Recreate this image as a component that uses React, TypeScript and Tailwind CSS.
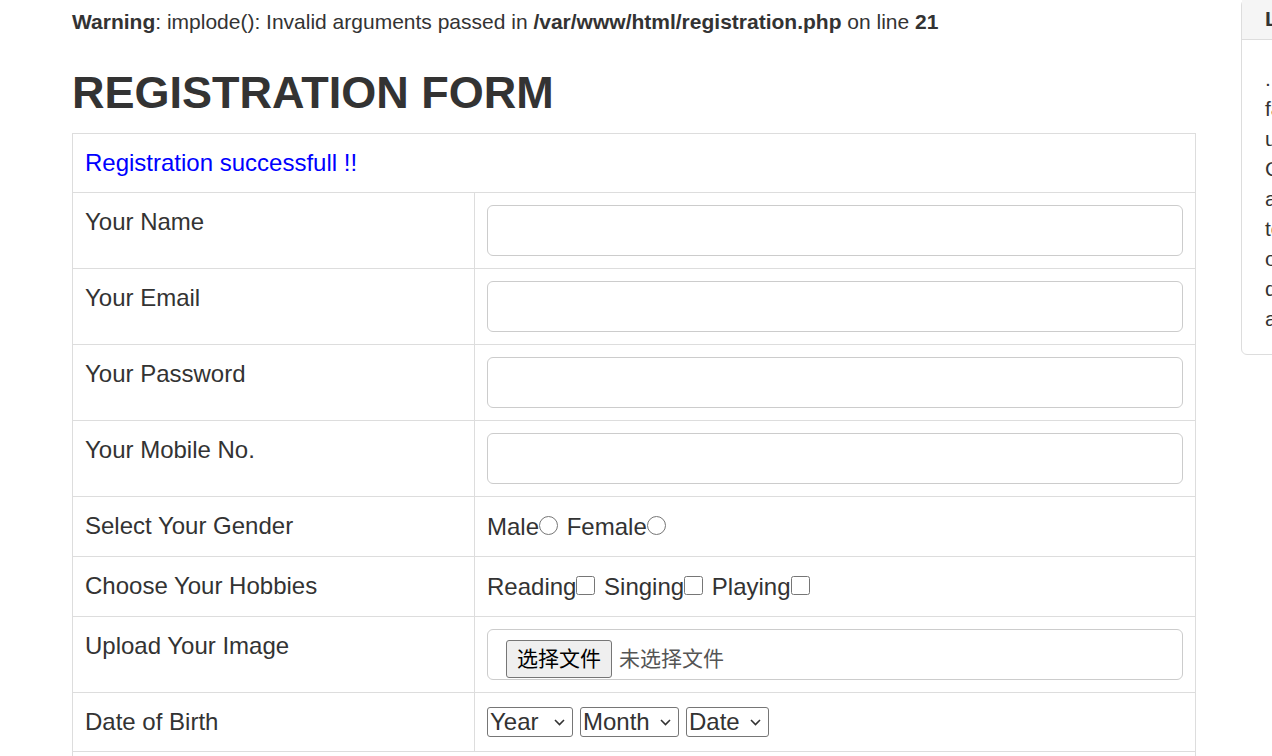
import React from "react";

const font = { fontFamily: '"Liberation Sans", Arial, "Noto Sans CJK SC", sans-serif' };

// Rows that hold a plain text input
const textFields = ["Your Name", "Your Email", "Your Password", "Your Mobile No."];

const Label: React.FC<{ children: React.ReactNode }> = ({ children }) => (
  <td className="w-[402px] border border-[#ddd] p-3 align-top leading-[34px]">
    {children}
  </td>
);

const Radio: React.FC<{ name: string }> = ({ name }) => (
  <input
    type="radio"
    name={name}
    className="m-0 mr-[2px] h-[19px] w-[19px] align-baseline"
  />
);

const Check: React.FC = () => (
  <input type="checkbox" className="m-0 mr-[2px] h-[19px] w-[19px] align-baseline" />
);

// Select box with a thin chevron on the right
const DobSelect: React.FC<{ label: string; width: string }> = ({ label, width }) => (
  <span className={`relative block h-[30px] ${width}`}>
    <select className="block h-[30px] w-full appearance-none rounded-[3px] border border-[#767676] bg-white pl-[2px] text-[24px] leading-[28px] text-[#333]">
      <option>{label}</option>
    </select>
    <svg
      className="pointer-events-none absolute right-[8px] top-[12px]"
      width="11"
      height="7"
      viewBox="0 0 11 7"
      fill="none"
    >
      <path d="M1 1l4.5 4.5L10 1" stroke="#333" strokeWidth="1.6" />
    </svg>
  </span>
);

export default function App() {
  return (
    <div
      className="flex h-[756px] w-[1272px] overflow-hidden bg-white text-[#333]"
      style={font}
    >
      {/* Main column */}
      <div className="w-[1124px] shrink-0 ml-[72px]">
        <p className="mt-[8px] text-[21px] leading-[28px]">
          <b>Warning</b>: implode(): Invalid arguments passed in{" "}
          <b>/var/www/html/registration.php</b> on line <b>21</b>
        </p>
        <h2 className="mt-[32px] mb-[15px] text-[45px] font-bold leading-[50px]">
          REGISTRATION FORM
        </h2>

        <form>
          <table className="w-[1124px] border-collapse text-[24px]">
            <tbody>
              <tr>
                <td
                  colSpan={2}
                  className="border border-[#ddd] p-3 leading-[34px] text-[#0000ff]"
                >
                  Registration successfull !!
                </td>
              </tr>

              {textFields.map((label) => (
                <tr key={label}>
                  <Label>{label}</Label>
                  <td className="border border-[#ddd] p-3">
                    <input
                      type={label === "Your Password" ? "password" : "text"}
                      className="block h-[51px] w-full rounded-[6px] border border-[#ccc] px-[18px] outline-none"
                    />
                  </td>
                </tr>
              ))}

              <tr>
                <Label>Select Your Gender</Label>
                <td className="border border-[#ddd] p-3 leading-[35px]">
                  Male<Radio name="gender" /> Female<Radio name="gender" />
                </td>
              </tr>

              <tr>
                <Label>Choose Your Hobbies</Label>
                <td className="border border-[#ddd] p-3 leading-[35px]">
                  Reading<Check /> Singing<Check /> Playing<Check />
                </td>
              </tr>

              <tr>
                <Label>Upload Your Image</Label>
                <td className="border border-[#ddd] p-3">
                  <div className="flex h-[51px] items-start rounded-[6px] border border-[#ccc] pl-[18px] pt-[10px] text-[21px]">
                    <div className="flex h-[38px] items-center gap-[7px]">
                      <button
                        type="button"
                        className="h-[38px] rounded-[3px] border border-[#767676] bg-[#efefef] px-[10px] text-black"
                      >
                        选择文件
                      </button>
                      <span className="text-[#555]">未选择文件</span>
                    </div>
                  </div>
                </td>
              </tr>

              <tr>
                <Label>Date of Birth</Label>
                <td className="border border-[#ddd] p-3 leading-[34px]">
                  <div className="flex h-[34px] items-center gap-[7px]">
                    <DobSelect label="Year" width="w-[86px]" />
                    <DobSelect label="Month" width="w-[99px]" />
                    <DobSelect label="Date" width="w-[83px]" />
                  </div>
                </td>
              </tr>

              <tr>
                <td colSpan={2} className="border border-[#ddd] p-3 leading-[34px]">
                  <button type="submit" className="rounded-[6px] bg-[#337ab7] px-5 text-white">
                    Register
                  </button>
                </td>
              </tr>
            </tbody>
          </table>
        </form>
      </div>

      {/* Side panel */}
      <div className="ml-[45px] mt-[-1px] h-[356px] w-[380px] shrink-0 rounded-[6px] border border-[#ddd]">
        <div className="h-[40px] border-b border-[#ddd] bg-[#f5f5f5] px-[23px] text-[21px] font-bold leading-[38px]">
          Latest Notice
        </div>
        <div className="px-[23px] pt-[24px] text-[21px] leading-[30px] whitespace-nowrap">
          <div>... details of your account</div>
          <div>fast and easy sign up</div>
          <div>upload a clear image</div>
          <div>Check your email inbox</div>
          <div>after you register</div>
          <div>to confirm the account</div>
          <div>or contact support</div>
          <div>during office hours</div>
          <div>any time you need help</div>
        </div>
      </div>
    </div>
  );
}
